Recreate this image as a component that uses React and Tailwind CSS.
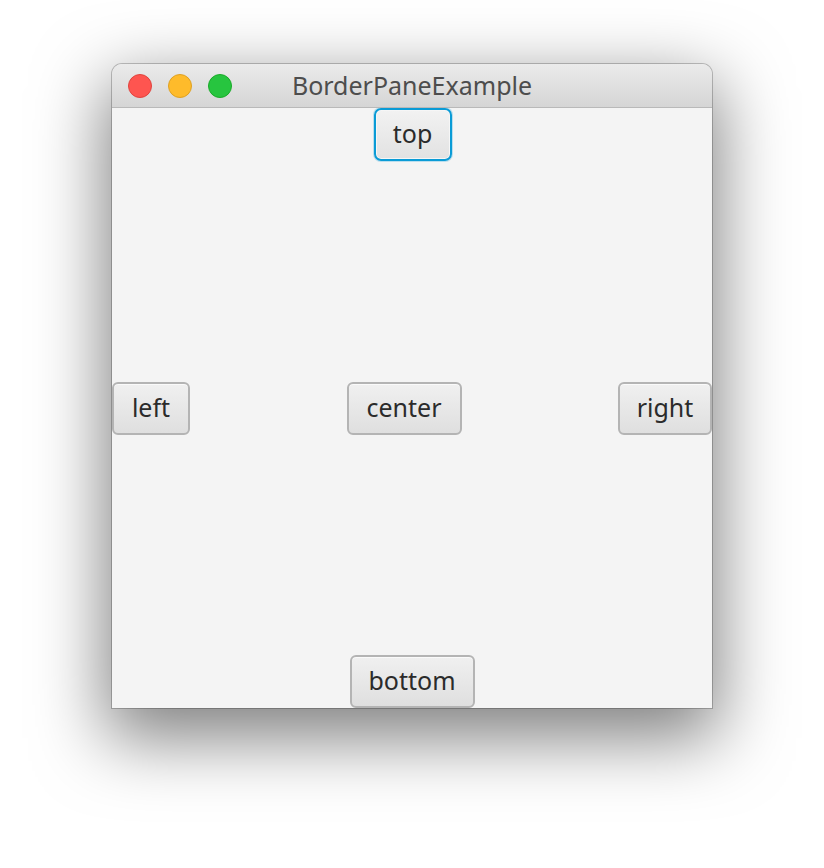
import React from "react";

const font = { fontFamily: '"Noto Sans", "Open Sans", sans-serif' };

function Btn({ label, w, focused }) {
  if (focused) {
    return (
      <div
        className={`${w} h-[53px] rounded-[7px] border-2 border-[#0a9bd6] bg-gradient-to-b from-[#f2f2f2] to-[#e2e2e2] flex items-center justify-center text-[25px] text-[#2b2b2b] leading-none shadow-[0_0_0_1px_rgba(10,155,214,0.25),inset_0_0_0_1px_#f6f6f6]`}
      >
        <span className="-mt-[2px]">{label}</span>
      </div>
    );
  }
  return (
    <div
      className={`${w} h-[53px] rounded-[6px] border-2 border-[#b4b4b4] bg-gradient-to-b from-[#f0f0f0] to-[#dfdfdf] flex items-center justify-center text-[25px] text-[#2b2b2b] leading-none shadow-[inset_0_1px_0_#fafafa]`}
    >
      <span className="-mt-[2px]">{label}</span>
    </div>
  );
}

export default function App() {
  return (
    <div className="w-[824px] h-[868px] bg-white pt-[64px] pl-[112px]" style={font}>
      <div className="w-[600px] rounded-t-[10px] shadow-[0_0_0_1px_rgba(0,0,0,0.22),0_24px_70px_6px_rgba(0,0,0,0.5)] bg-[#f4f4f4]">
        <div className="h-[44px] rounded-t-[10px] bg-gradient-to-b from-[#ebebeb] to-[#d5d5d5] border-b border-[#b9b9b9] flex items-center relative">
          <div className="flex items-center gap-[16px] pl-[16px]">
            <div className="w-[24px] h-[24px] rounded-full bg-[#fe5550] border border-[#e0443e]" />
            <div className="w-[24px] h-[24px] rounded-full bg-[#febb2b] border border-[#dea123]" />
            <div className="w-[24px] h-[24px] rounded-full bg-[#27c53f] border border-[#1aab29]" />
          </div>
          <div className="absolute inset-0 flex items-center justify-center text-[25px] text-[#4d4d4d] leading-none">
            <span className="-mt-[1px]">BorderPaneExample</span>
          </div>
        </div>
        <div className="h-[600px] grid grid-rows-[53px_1fr_53px] grid-cols-[auto_1fr_auto]">
          <div className="col-span-3 flex justify-center">
            <div className="ml-[1px]">
              <Btn label="top" w="w-[78px]" focused />
            </div>
          </div>
          <div className="flex items-center">
            <Btn label="left" w="w-[78px]" />
          </div>
          <div className="flex items-center justify-center">
            <Btn label="center" w="w-[115px]" />
          </div>
          <div className="flex items-center">
            <Btn label="right" w="w-[94px]" />
          </div>
          <div className="col-span-3 flex justify-center">
            <Btn label="bottom" w="w-[125px]" />
          </div>
        </div>
      </div>
    </div>
  );
}
